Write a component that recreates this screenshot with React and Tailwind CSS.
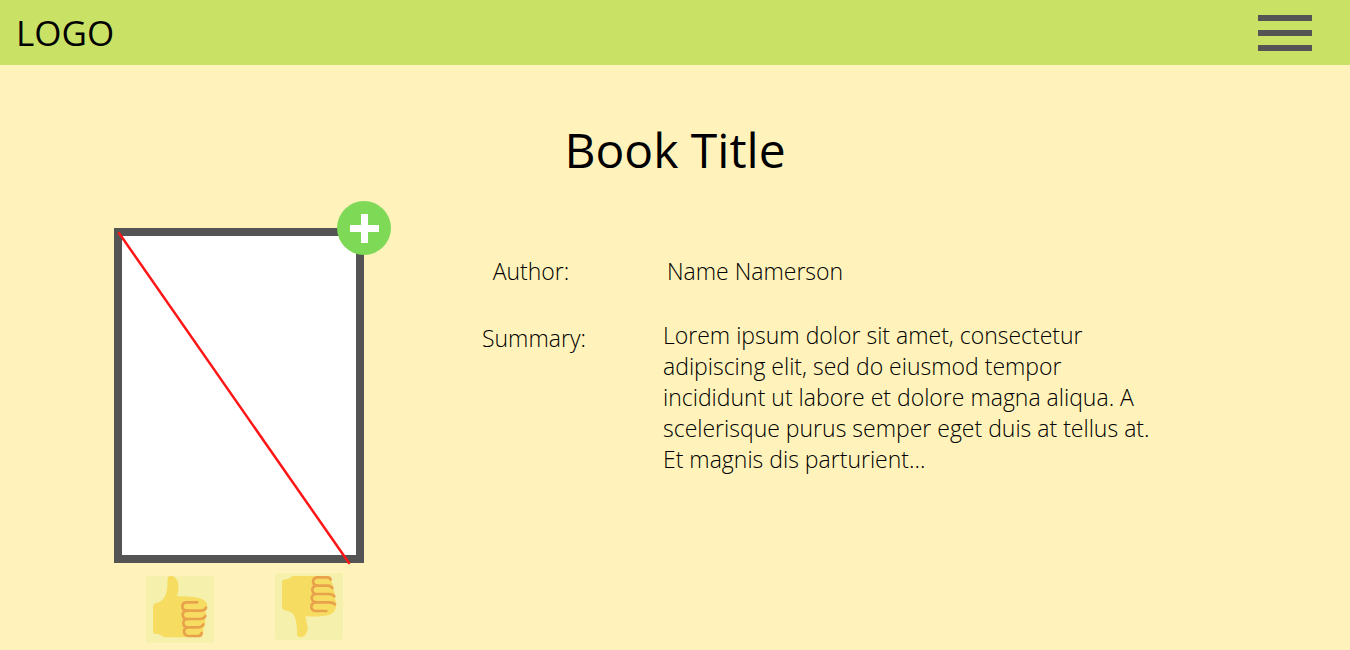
function ThumbUp() {
  return (
    <svg viewBox="48 47 204 201" className="block h-[67px] w-[68px]" aria-hidden="true">
      <rect x="48" y="47" width="204" height="201" rx="5" fill="#f5f0ab" />
      <path
        d="M113 57 Q113 47 121 47 H127 Q134 48 139 57 Q148 70 145 88 L141 108 Q168 107 197 111 Q225 115 231 132 Q233 145 226 153 Q231 165 225 178 Q228 192 220 204 Q221 221 216 227 Q212 231 206 231 H103 Q91 223 85 221 H75 Q69 218 69 212 V138 Q69 132 77 129 Q97 125 105 108 Q113 92 113 57 Z"
        fill="#f6dc60"
      />
      <path
        d="M202 126 H169 Q157 127 157 138 Q157 151 170 151 M228 142 Q224 151 211 151 H172 Q158 152 158 164 Q159 176 171 176 M226 167 Q222 176 209 176 H172 Q159 178 160 189 Q161 201 174 201 M220 192 Q216 201 205 201 H175 Q162 202 162 213 Q163 226 176 227 H204 Q214 227 215 218"
        fill="none"
        stroke="#e9a24c"
        strokeWidth="8"
        strokeLinecap="round"
        strokeLinejoin="round"
      />
    </svg>
  );
}

function ThumbDown() {
  return (
    <svg viewBox="45 39 204 201" className="block h-[67px] w-[68px]" aria-hidden="true">
      <rect x="45" y="39" width="204" height="201" rx="5" fill="#f5f0ab" />
      <path
        d="M99 48 H205 Q214 50 214 65 Q221 75 220 88 Q227 99 222 111 Q230 122 228 142 Q225 157 210 164 Q185 171 137 169 Q138 184 143 199 Q144 216 134 227 Q127 232 118 231 Q111 230 111 222 Q112 189 104 170 Q97 155 82 153 Q70 151 66 144 V66 Q67 59 80 58 Q88 57 99 48 Z"
        fill="#f6dc60"
      />
      <path
        d="M199 153 H166 Q154 151 154 140 Q154 129 167 127 M225 133 Q220 127 208 127 H170 Q156 126 155 114 Q156 103 168 102 M223 109 Q219 102 206 102 H169 Q157 100 157 89 Q158 78 170 77 M217 84 Q213 77 202 77 H173 Q160 76 159 65 Q160 53 172 52 H201 Q210 52 212 59"
        fill="none"
        stroke="#e9a24c"
        strokeWidth="8"
        strokeLinecap="round"
        strokeLinejoin="round"
      />
    </svg>
  );
}

function BookCover() {
  return (
    <div className="w-[250px] shrink-0">
      <div className="relative h-[335px] border-8 border-[#545454] bg-white">
        <svg
          viewBox="0 0 250 335"
          className="absolute -top-2 -left-2 h-[335px] w-[250px] overflow-visible"
          role="img"
          aria-label="Book cover"
        >
          <path d="M5 5 L235 335" stroke="#ff1616" strokeWidth="2.5" strokeLinecap="round" />
        </svg>
        <button
          type="button"
          aria-label="Add book"
          className="absolute -top-[35px] -right-[35px] size-[54px] rounded-full bg-[#7ed957]"
        >
          <svg viewBox="0 0 54 54" className="block size-[54px]" aria-hidden="true">
            <path d="M24 13h7v11h11v7H31v11h-7V31H13v-7h11z" fill="#fff" />
          </svg>
        </button>
      </div>
      <div className="flex justify-between pt-[10px] pr-[21px] pl-8">
        <button type="button" aria-label="Like" className="mt-[3px]">
          <ThumbUp />
        </button>
        <button type="button" aria-label="Dislike" className="mb-[3px]">
          <ThumbDown />
        </button>
      </div>
    </div>
  );
}

export default function App() {
  return (
    <div className="min-h-screen bg-[#fff3bb] font-['Open_Sans','Noto_Sans',sans-serif] text-black">
      <header className="flex h-[65px] items-center justify-between bg-[#c9e265] pr-[38px] pl-4">
        <a href="#" className="text-[35px] leading-[48px]">
          LOGO
        </a>
        <button type="button" aria-label="Menu" className="flex flex-col gap-[9px]">
          <span className="h-[6px] w-[54px] bg-[#545454]" />
          <span className="h-[6px] w-[54px] bg-[#545454]" />
          <span className="h-[6px] w-[54px] bg-[#545454]" />
        </button>
      </header>
      <main className="pt-[53px]">
        <h1 className="text-center text-[48px] leading-[64px]">Book Title</h1>
        <div className="flex gap-[118px] pt-[46px] pr-[200px] pl-[114px]">
          <BookCover />
          <dl className="grid grow grid-cols-[102px_1fr] content-start gap-x-[79px] gap-y-[33px] pt-7 text-[23px] leading-[31px] font-light">
            <dt className="pr-1 text-center">Author:</dt>
            <dd className="pl-1">Name Namerson</dd>
            <dt className="pt-[3px] text-center">Summary:</dt>
            <dd>
              Lorem ipsum dolor sit amet, consectetur adipiscing elit, sed do eiusmod tempor incididunt
              ut labore et dolore magna aliqua. A scelerisque purus semper eget duis at tellus at. Et
              magnis dis parturient...
            </dd>
          </dl>
        </div>
      </main>
    </div>
  );
}
